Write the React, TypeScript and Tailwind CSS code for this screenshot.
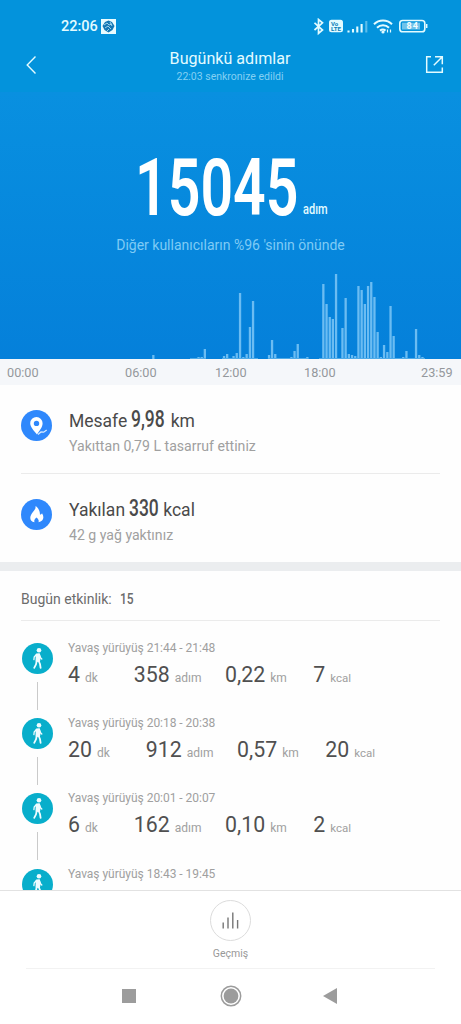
import React from "react";

// [x, height] of every bar of the day
const bars = [
  [153.3, 4], [191.5, 1], [198.5, 2], [201.7, 2], [204.8, 10], [224, 3], [227.1, 5],
  [233.5, 3], [236.7, 6], [240, 66], [243.3, 2], [246.6, 5], [249.9, 32], [253, 58],
  [256.2, 1], [269, 4], [272, 19], [275.2, 5], [285.2, 1], [291.4, 2], [294.5, 8],
  [297.7, 15], [307.3, 2], [320.1, 1], [323.3, 75], [326.5, 55], [329.7, 42],
  [332.8, 40], [336, 85], [339.2, 1], [342.4, 31], [345.6, 61], [348.8, 5], [352, 4],
  [355.2, 3], [358.4, 73], [361.6, 69], [364.8, 55], [368, 73], [371.2, 77],
  [374.4, 62], [377.6, 27], [380.8, 2], [384, 14], [387.3, 7], [390.5, 53],
  [393.6, 23], [396.8, 1], [403.2, 2], [406.4, 8], [416, 30], [419.2, 4], [422.4, 2],
];

type ActivityItem = { time: string; values?: [string, string, string, string] };

const activities: ActivityItem[] = [
  { time: "21:44 - 21:48", values: ["4", "358", "0,22", "7"] },
  { time: "20:18 - 20:38", values: ["20", "912", "0,57", "20"] },
  { time: "20:01 - 20:07", values: ["6", "162", "0,10", "2"] },
  { time: "18:43 - 19:45" },
];

const StatusBar = () => {
  return (
    <div className="flex h-[42px] items-end justify-between pl-[61px] pr-[32px] pb-[6px]">
      <div className="flex items-center gap-[3px]">
        <span className="w-[37px] text-[14.5px] leading-[18px] font-medium">22:06</span>
        <svg className="-mt-px" width="15" height="15" viewBox="0 0 15 15">
          <rect width="15" height="15" fill="#eafcff" />
          <path d="M7.5 1.5 11 3l2.5 4-2 4-4 2.5-4-2.5-2-4L4 3Z" fill="#1377b5" />
          <path d="m3 6 3-2 2 2 3-1M4 9l3-2 3 3M6 12l2-2M9 3l2 4" stroke="#bfe8f8" strokeWidth=".8" fill="none" />
        </svg>
      </div>
      <div className="flex h-[18px] items-center">
        <svg width="115" height="18" viewBox="0 0 115 18" fill="none" stroke="#e3fbff">
          <path d="m.5 4.800 8 7.200-4 3.500v-14l4 3.300-8 7.200" strokeWidth="1.7" />
          <rect x="15" y="1.8" width="14" height="12.5" rx="2.5" fill="#e3fbff" stroke="none" />
          <g fontFamily="Roboto" fontWeight="700" fontSize="6" fill="#087eb8" stroke="none">
            <text x="17" y="7.7">Vo</text>
            <text x="17" y="13.3" textLength="10" lengthAdjust="spacingAndGlyphs">LTE</text>
          </g>
          <g strokeWidth="2.1">
            <path d="M34.5 14.5v-2M39 14.5v-3.500M43.300 14.500v-6M47.600 14.500V6" />
            <path d="M52.300 14.500V3" opacity=".4" />
          </g>
          <g strokeWidth="2">
            <path d="M60 6.300a12.800 12.800 0 0 1 18 0M63 9.700a8.500 8.500 0 0 1 12 0M66 12.600a4.400 4.400 0 0 1 5.500 0" />
            <path d="M73.500 11.500v3M76.500 11.500v3" strokeWidth="1.200" />
          </g>
          <circle cx="69" cy="14" r="1.6" fill="#e3fbff" stroke="none" />
          <rect x="85.8" y="2.5" width="25" height="11.2" rx="2.8" strokeWidth="1.6" />
          <rect x="88" y="4.700" width="18" height="6.8" fill="#6fc3ea" stroke="none" />
          <path d="M112.700 6v4" strokeWidth="1.5" />
          <text x="92.500" y="11.400" fontFamily="Roboto" fontWeight="700" fontSize="9" fill="#f2fdff" stroke="none" textLength="11.5">84</text>
        </svg>
      </div>
    </div>
  );
};

const Header = () => {
  return (
    <div className="h-[92px] shrink-0 bg-[#0393dc] text-[#e3fbff]">
      <StatusBar />
      <div className="flex h-[50px] items-start justify-between pl-[26px] pr-[17px]">
        <svg className="mt-[13px] mr-[-9px]" width="18" height="20" viewBox="0 0 18 20" fill="none" stroke="currentColor" strokeWidth="1.4">
          <path d="M9.5 1.5 1.2 10l8.3 8.5" />
        </svg>
        <div className="flex flex-col items-center pt-[7px]">
          <h1 className="text-[16.1px] leading-[20px]">Bugünkü adımlar</h1>
          <p className="mt-px text-[10.5px] leading-[14px] text-[#83d0f3]">22:03 senkronize edildi</p>
        </div>
        <svg className="mt-[13px]" width="19" height="19" viewBox="0 0 19 19" fill="none" stroke="currentColor" strokeWidth="1.5">
          <path d="M6 1.7H1.7v15.6h15.6v-4.8M10 1.7h7.3v7.5M17.3 1.7l-8.5 8.5" />
        </svg>
      </div>
    </div>
  );
};

const Steps = () => {
  return (
    <div className="flex h-[267px] shrink-0 flex-col bg-linear-to-b from-[#0990e0] to-[#0580da]">
      <div className="flex h-[132px] shrink-0 items-end pl-[135px]">
        <div className="flex w-[165px]">
          <span className="inline-block origin-bottom-left scale-x-[0.72] text-[79.5px] leading-[72px] font-semibold text-white">15045</span>
        </div>
        <span className="mb-[4px] inline-block origin-left scale-x-[0.76] pl-[4px] text-[14.5px] leading-[20px] font-medium text-[#e3fbff]">adım</span>
      </div>
      <p className="mt-[11px] text-center text-[14px] leading-[20px] text-[#7fcbf5]">Diğer kullanıcıların %96 &apos;sinin önünde</p>
      <svg className="mt-auto block" width="461" height="90" viewBox="0 0 461 90" fill="#6bbcf2">
        {bars.map(([x, h]) => (
          <rect key={x} x={x - 1.1} y={90 - h} width="2.3" height={h} />
        ))}
        <path d="M190 89.5h16M222 89.5h36M268 89.5h40M319 89.5h106" stroke="#4fabe8" strokeWidth="1" />
      </svg>
    </div>
  );
};

const Axis = () => {
  return (
    <div className="flex h-[26px] shrink-0 items-center bg-[#f5f7fa] pt-[2px] pl-[7px] text-[12.7px] leading-none text-[#94989c]">
      <span className="w-[118px]">00:00</span>
      <span className="w-[90px]">06:00</span>
      <span className="w-[89px]">12:00</span>
      <span className="w-[117px]">18:00</span>
      <span>23:59</span>
    </div>
  );
};

type StatProps = { icon: React.ReactNode; label: string; value: string; unit: string; note: string };

const Stat = ({ icon, label, value, unit, note }: StatProps) => {
  return (
    <div className="flex h-[88px] shrink-0 items-start pl-[21px]">
      <div className="mt-[25px] h-[31px] w-[31px] shrink-0 rounded-full bg-[#2f88fc]">{icon}</div>
      <div className="ml-[17px] pt-[22px]">
        <div className="flex h-[26px] items-baseline text-[17.5px] leading-[26px] text-[#4a4a4a]">
          <span>{label}</span>
          <span className="ml-[4px] inline-block origin-left scale-x-[0.76] text-[23px] leading-[26px] font-medium">{value}</span>
          <span className="-ml-[5px]">{unit}</span>
        </div>
        <p className="mt-[3px] text-[14.1px] leading-[20px] text-[#a0a0a0]">{note}</p>
      </div>
    </div>
  );
};

const PinIcon = () => (
  <svg width="31" height="31" viewBox="0 0 31 31">
    <path fillRule="evenodd" d="M15.5 7a6.300 6.300 0 0 0-6.300 6.300c0 4 4.500 8.200 6.800 11.200 2.200-3.500 5.600-7.200 5.600-11.200A6.200 6.200 0 0 0 15.500 7Zm0 3.700a2.700 2.700 0 1 1 0 5.400 2.700 2.700 0 0 1 0-5.400Z" fill="#fff" />
    <path d="m17 24.500 3-2.500 2.700.2 3-2.200" stroke="#d7eaff" strokeWidth="1.3" fill="none" />
  </svg>
);

const FlameIcon = () => (
  <svg width="31" height="31" viewBox="0 0 31 31">
    <path d="M14.500 7c.5 3-1.500 4.500-3.500 7.300-2.800 4-2.300 8 2.500 9-.7-2 .3-3.200 2-4.700 1.700 1.500 2.700 2.700 2 4.700 4.800-1 6.200-5 3.500-9-.6 1-1.200 1.400-2 1.500C18.900 12 17.500 9 14.500 7Z" fill="#fff" />
  </svg>
);

const WalkIcon = () => (
  <svg width="31" height="31" viewBox="0 0 31 31" fill="none" stroke="#effcff" strokeLinecap="round" strokeLinejoin="round">
    <circle cx="17" cy="7.3" r="2.3" fill="#effcff" stroke="none" />
    <path d="m14.500 11.300 2.800-.2.600 3.700-.6 3.400-3-.2Z" fill="#effcff" strokeWidth="1.5" />
    <path d="m14.200 11.800-2 2.200-.3 2.600M17.700 12.400l.9 2.400 1.200 1.200" strokeWidth="1.3" />
    <path d="m14.700 18-.7 3.400-1.800 3.400M16.700 18l1.300 3 .6 3.900" strokeWidth="1.8" />
  </svg>
);

const Activity = ({ time, values }: ActivityItem) => {
  return (
    <div className="flex h-[75.2px] shrink-0 pl-[22px]">
      <div className="flex w-[31px] shrink-0 flex-col items-center">
        <div className="h-[31px] w-[31px] shrink-0 rounded-full bg-[#08aecb]"><WalkIcon /></div>
        {values && <div className="mt-[8px] h-[28px] w-px bg-[#cacaca]" />}
      </div>
      <div className="ml-[15px] -mt-[3px]">
        <p className="text-[12px] leading-[16px] tracking-[-0.03px] text-[#a0a0a0]">Yavaş yürüyüş {time}</p>
        {values && (
          <div className="mt-[2px] flex items-baseline text-[21.3px] leading-[34px] whitespace-nowrap text-[#505050]">
            <span>{values[0]}</span>
            <span className="ml-[5px] text-[12px] text-[#a0a0a0]">dk</span>
            <span className="ml-[36px]">{values[1]}</span>
            <span className="ml-[5px] text-[12px] text-[#a0a0a0]">adım</span>
            <span className="ml-[23.5px]">{values[2]}</span>
            <span className="ml-[5px] text-[12px] text-[#a0a0a0]">km</span>
            <span className="ml-[26.5px]">{values[3]}</span>
            <span className="ml-[5px] text-[11.5px] text-[#a0a0a0]">kcal</span>
          </div>
        )}
      </div>
    </div>
  );
};

const BottomBar = () => {
  return (
    <div className="flex h-[134px] shrink-0 flex-col border-t border-[#e2e2e2] bg-white">
      <div className="flex h-[77px] flex-col items-center pt-[9px]">
        <div className="flex h-[41px] w-[41px] items-center justify-center rounded-full border border-[#dcdcdc]">
          <svg width="19" height="19" viewBox="0 0 19 19" stroke="#777" strokeWidth="1.4">
            <path d="M2.2 17.5v-6M7 17.5v-11M11.8 17.5v-16M16.6 17.5v-8.5" />
          </svg>
        </div>
        <span className="mt-[6px] text-[10.5px] leading-[13px] text-[#999]">Geçmiş</span>
      </div>
      <div className="mx-[26px] h-px bg-[#f2f2f2]" />
      <div className="flex flex-1 items-start justify-between pl-[122px] pr-[124px] pt-[16px]">
        <div className="mt-[4px] h-[14px] w-[14px] bg-[#9c9c9c]" />
        <svg className="ml-[2px]" width="22" height="22" viewBox="0 0 22 22">
          <circle cx="11" cy="11" r="9.7" fill="none" stroke="#9c9c9c" strokeWidth="1.5" />
          <circle cx="11" cy="11" r="7.4" fill="#9c9c9c" />
        </svg>
        <svg className="mt-[3px]" width="14" height="16" viewBox="0 0 14 16">
          <path d="M14 0v16L0 8Z" fill="#9c9c9c" />
        </svg>
      </div>
    </div>
  );
};

const App = () => {
  return (
    <div className="flex h-[1024px] w-[461px] flex-col overflow-hidden bg-[#fefefe] font-['Roboto',sans-serif]">
      <Header />
      <Steps />
      <Axis />
      <Stat icon={<PinIcon />} label="Mesafe" value="9,98" unit="km" note="Yakıttan 0,79 L tasarruf ettiniz" />
      <div className="mx-[21px] h-px shrink-0 bg-[#ebebeb]" />
      <Stat icon={<FlameIcon />} label="Yakılan" value="330" unit="kcal" note="42 g yağ yaktınız" />
      <div className="h-[9px] shrink-0 bg-[#ebedef]" />
      <div className="mx-[21px] flex h-[50px] shrink-0 items-center border-b border-[#ebebeb] pt-[8px] text-[14px] text-[#6c6c6c]">
        <span>Bugün etkinlik:</span>
        <span className="ml-[8px] inline-block origin-left scale-x-[0.8] text-[15px] font-medium">15</span>
      </div>
      <div className="flex min-h-0 flex-1 flex-col overflow-hidden pt-[22px]">
        {activities.map((item) => (
          <Activity key={item.time} {...item} />
        ))}
      </div>
      <BottomBar />
    </div>
  );
};

export default App;
